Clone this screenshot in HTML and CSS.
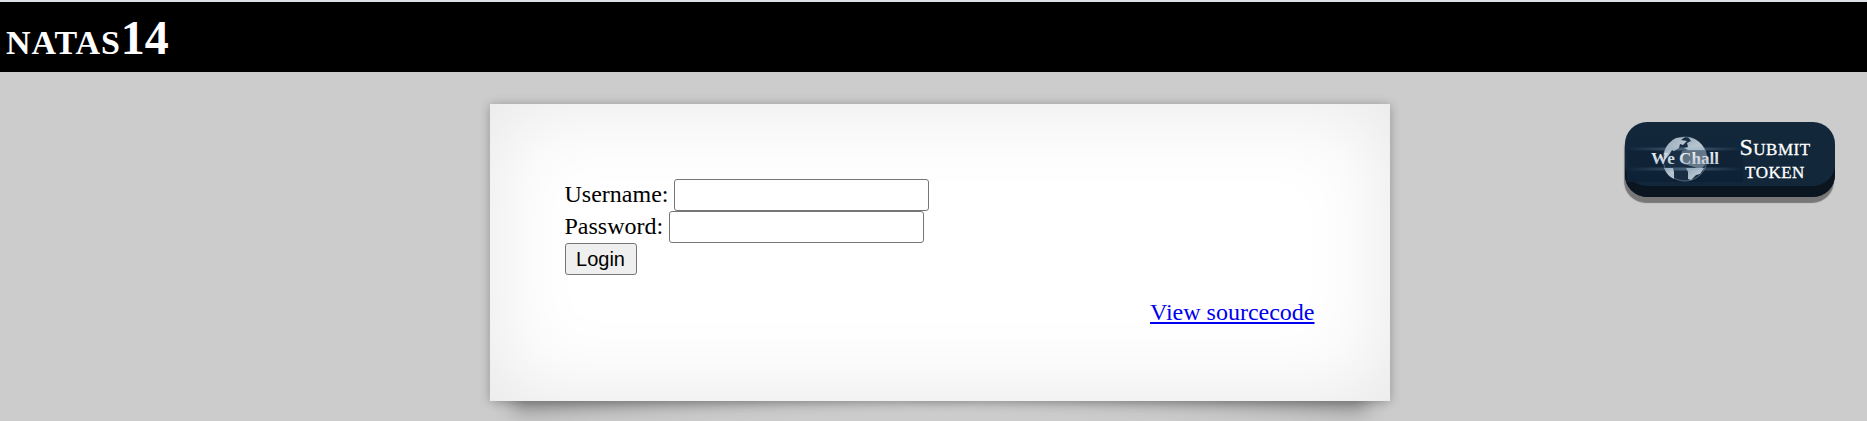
FILE: index.html
```html
<!DOCTYPE html>
<html lang="en">
<head>
<meta charset="utf-8">
<title>natas14</title>
<link rel="stylesheet" href="styles.css">
</head>
<body>
<header class="header"><h1 class="title"><span class="title-name">natas</span>14</h1></header>
<main class="page">
  <section class="card">
    <form class="form">
      <label class="row">Username: <input class="field" type="text"></label>
      <label class="row">Password: <input class="field" type="password"></label>
      <button class="login" type="button">Login</button>
    </form>
    <div class="source"><a href="#">View sourcecode</a></div>
  </section>
  <div class="token">
    <svg class="logo" width="116" height="46" viewBox="0 0 116 46">
      <defs>
        <linearGradient id="beam"><stop offset="0" stop-color="#8db0cc" stop-opacity="0"/><stop offset=".5" stop-color="#8db0cc" stop-opacity=".8"/><stop offset="1" stop-color="#8db0cc" stop-opacity="0"/></linearGradient>
        <linearGradient id="land" x1="0" y1="0" x2="1" y2="1"><stop offset="0" stop-color="#93a6b6"/><stop offset=".6" stop-color="#b7c4cf"/><stop offset="1" stop-color="#b0bfcc"/></linearGradient>
        <linearGradient id="letters" x1="0" y1="0" x2="0" y2="1"><stop offset="0" stop-color="#f1f4f7"/><stop offset="1" stop-color="#b3c2cf"/></linearGradient>
        <linearGradient id="sky" x1="0" y1="0" x2="0" y2="1"><stop offset="0" stop-color="#13273b"/><stop offset="1" stop-color="#0d2136"/></linearGradient>
      </defs>
      <rect width="116" height="46" fill="url(#sky)"/>
      <rect y="14" width="116" height="19" fill="#0f2236"/>
      <circle cx="58" cy="23" r="22" fill="#182d42" stroke="#6f8497" stroke-width=".7"/>
      <g fill="url(#land)">
        <path d="M37 17Q40 6 49 2L58 1L54 4L60 5L56 9L53 8L52 12L47 15L45 14L42 19L37 25Z"/>
        <path d="M61 1Q69 2 75 9L78 14L61 14L57 12L61 11L60 7L64 5Z"/>
        <path d="M61 14L78 14L80 22L78 29L74 33L57 28L53 22L55 15Z" opacity=".5"/>
        <path d="M38 32L46 32L47 36L47 43Q40 40 37 32Z"/>
        <path d="M59 32L77 32L73 38L69 39L64 44L61 43L61 36Z"/>
      </g>
      <rect y="11.500" width="116" height="3" fill="url(#beam)" opacity=".5"/>
      <rect y="31.500" width="116" height="3" fill="url(#beam)" opacity=".5"/>
      <text class="logo-text" x="24" y="28" textLength="68" lengthAdjust="spacingAndGlyphs">We Chall</text>
    </svg>
    <span class="token-label">Submit token</span>
  </div>
</main>
</body>
</html>
```
FILE: styles.css
```css
body {
  margin: 0;
  height: 421px;
  overflow: hidden;
  background: #ccc;
  font: 24px/27px "Liberation Serif", "Times New Roman", serif;
  color: #000;
}
.header {
  box-sizing: border-box;
  height: 72px;
  border-top: 2px solid #dee1e6;
  background: #000;
  color: #fff;
  padding: 8px 6px;
}
.title {
  margin: 0;
  font-size: 48px;
  line-height: 55px;
  font-variant: small-caps;
}
.title-name { letter-spacing: .9px; }
.page {
  display: grid;
  grid-template-columns: 490px 900px 1fr;
  align-items: start;
}
.card {
  grid-column: 2;
  box-sizing: border-box;
  position: relative;
  height: 297px;
  margin-top: 32px;
  padding: 75px 75.5px 75px 74.5px;
  background: #fff;
  box-shadow: 0 1px 10px rgba(0,0,0,.28), 0 0 90px rgba(0,0,0,.1) inset;
}
.card::before, .card::after {
  content: "";
  position: absolute;
  z-index: -1;
  bottom: 19px;
  left: 20px;
  width: 50%;
  height: 20%;
  max-width: 450px;
  box-shadow: 0 18px 20px rgba(0,0,0,.31);
  transform: rotate(-3deg);
}
.card::after {
  left: auto;
  right: 20px;
  transform: rotate(3deg);
}
.form {
  display: flex;
  flex-direction: column;
  align-items: flex-start;
}
.row {
  display: flex;
  gap: 6px;
  height: 32px;
  line-height: 31px;
}
.field {
  box-sizing: border-box;
  width: 255px;
  height: 32px;
  margin: 0;
  border: 1px solid #767676;
  border-radius: 3px;
  background: #fff;
}
.login {
  box-sizing: border-box;
  width: 72px;
  height: 32px;
  padding: 0;
  border: 1px solid #767676;
  border-radius: 3px;
  background: #efefef;
  color: #000;
  font: 20px "Liberation Sans", Arial, sans-serif;
}
.source {
  margin-top: 24px;
  text-align: right;
}
.source a { color: #00e; }
.token {
  justify-self: end;
  box-sizing: border-box;
  display: flex;
  align-items: center;
  width: 210px;
  height: 75px;
  margin: 50px 32px 0 0;
  padding: 9px 22px 11px 2px;
  border-radius: 22px;
  background: #13273b;
  color: #fff;
  box-shadow: inset 0 -11px 0 #0a1520, -1px 6px 1px #777;
}
.logo { flex: none; }
.logo-text {
  font: bold 16px "Liberation Serif", serif;
  fill: url(#letters);
}
.token-label {
  flex: none;
  width: 76px;
  margin-left: -6px;
  font-variant: small-caps;
  letter-spacing: .5px;
  line-height: 23px;
  text-align: center;
  -webkit-text-stroke: .3px #fff;
}
```
